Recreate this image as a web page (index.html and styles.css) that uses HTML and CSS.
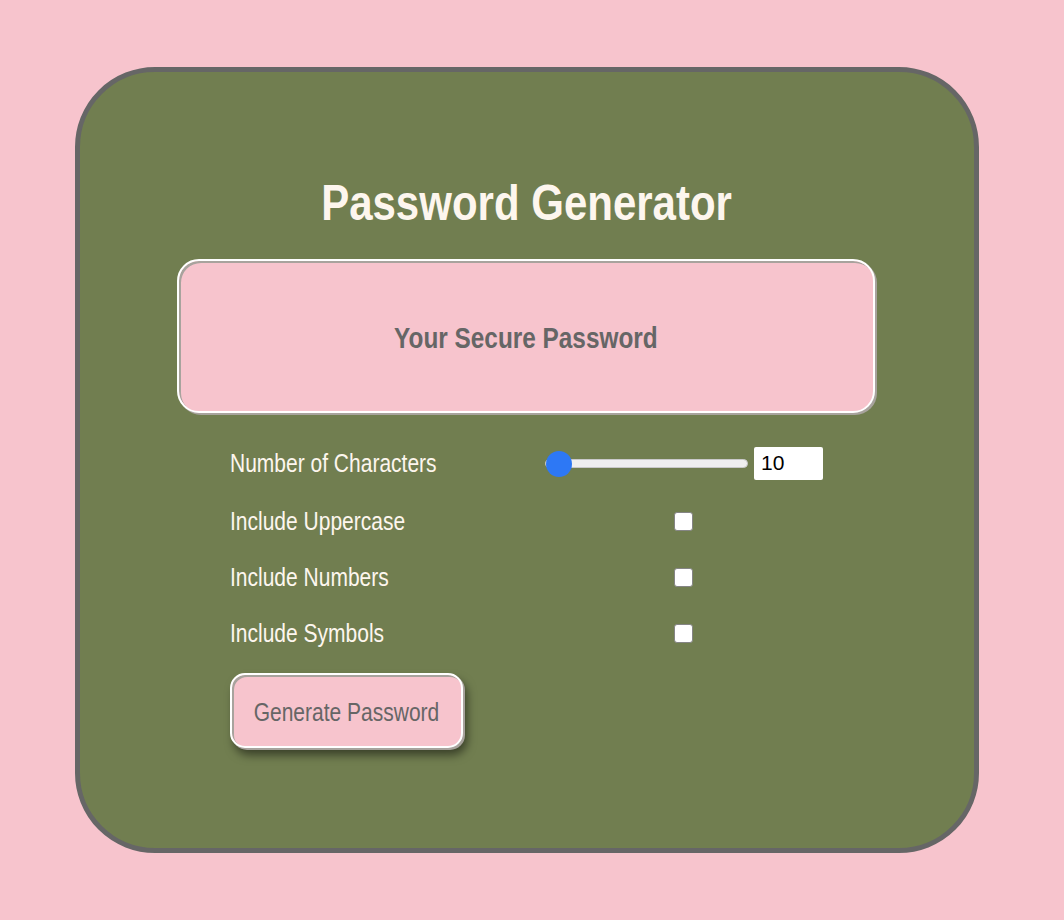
FILE: index.html
```html
<!DOCTYPE html>
<html lang="en">
<head>
<meta charset="utf-8">
<title>Password Generator</title>
<link rel="stylesheet" href="styles.css">
</head>
<body>
  <main class="card">
    <h1 class="title"><span class="narrow">Password Generator</span></h1>
    <div class="output"><span class="narrow">Your Secure Password</span></div>
    <div class="options">
      <label class="opt-label" for="len"><span class="narrow-left">Number of Characters</span></label>
      <div class="opt-control">
        <input class="range" type="range" id="len" min="10" max="100" value="10">
        <input class="num" type="number" value="10">
      </div>
      <label class="opt-label" for="up"><span class="narrow-left">Include Uppercase</span></label>
      <div class="opt-control"><input class="check" type="checkbox" id="up"></div>
      <label class="opt-label" for="nums"><span class="narrow-left">Include Numbers</span></label>
      <div class="opt-control"><input class="check" type="checkbox" id="nums"></div>
      <label class="opt-label" for="sym"><span class="narrow-left">Include Symbols</span></label>
      <div class="opt-control"><input class="check" type="checkbox" id="sym"></div>
    </div>
    <button class="gen" type="button"><span class="narrow">Generate Password</span></button>
  </main>
</body>
</html>
```
FILE: styles.css
```css
html, body {
  margin: 0;
  padding: 0;
  background: #f7c4cd;
}
body {
  padding: 67px 0 0 75px;
  font-family: "Liberation Sans", Arial, sans-serif;
}
.narrow {
  display: inline-block;
  white-space: nowrap;
  transform: scaleX(0.84);
  transform-origin: center;
}
.narrow-left {
  display: inline-block;
  white-space: nowrap;
  transform: scaleX(0.84);
  transform-origin: left center;
}
.card {
  box-sizing: border-box;
  width: 904px;
  height: 786px;
  background: #717e50;
  border: 5px solid #666666;
  border-radius: 80px;
  padding: 103px 0 0 0;
  display: flex;
  flex-direction: column;
  align-items: center;
}
.title {
  margin: 0;
  font-size: 50px;
  line-height: 56px;
  font-weight: bold;
  color: #fdf6ee;
}
.output {
  box-sizing: border-box;
  margin: 28px 2px 0 0;
  padding-top: 4px;
  width: 698px;
  height: 154px;
  background: #f7c4cd;
  border: 2px solid #ffffff;
  border-radius: 22px;
  box-shadow: 2px 2px 0 #a8a39d, inset 2px 2px 0 #a8a39d;
  display: flex;
  align-items: center;
  justify-content: center;
  font-size: 29px;
  font-weight: bold;
  color: #666666;
}
.options {
  align-self: flex-start;
  margin: 34px 0 0 150px;
  display: grid;
  grid-template-columns: 315px 278px;
  grid-template-rows: 32px 28px 28px 28px;
  row-gap: 28px;
  align-items: center;
}
.opt-label {
  color: #fdf6ee;
  font-size: 25px;
  line-height: 28px;
  white-space: nowrap;
}
.opt-control {
  display: flex;
  justify-content: center;
  align-items: center;
  height: 28px;
}
.range {
  -webkit-appearance: none;
  appearance: none;
  width: 203px;
  height: 26px;
  margin: 0 6px 0 0;
  padding: 0;
  background: transparent;
}
.range::-webkit-slider-runnable-track {
  height: 9px;
  background: #efefef;
  border: 1px solid #c9c9c9;
  border-radius: 6px;
}
.range::-webkit-slider-thumb {
  -webkit-appearance: none;
  appearance: none;
  width: 26px;
  height: 26px;
  border-radius: 50%;
  background: #2d78f5;
  border: none;
  margin-top: -8.5px;
}
.num {
  box-sizing: border-box;
  width: 69px;
  height: 33px;
  margin: 0;
  border: none;
  border-radius: 2px;
  font-family: "Liberation Sans", Arial, sans-serif;
  font-size: 21px;
  padding: 0 7px;
  background: #ffffff;
  color: #000;
}
.check {
  -webkit-appearance: none;
  appearance: none;
  box-sizing: border-box;
  width: 19px;
  height: 19px;
  margin: 0 2px 0 0;
  background: #ffffff;
  border: 1.5px solid #858585;
  border-radius: 3px;
}
.gen {
  align-self: flex-start;
  margin: 26px 0 0 150px;
  box-sizing: border-box;
  width: 233px;
  height: 75px;
  padding: 3px 0 0 0;
  background: #f7c4cd;
  border: 2px solid #ffffff;
  border-radius: 15px;
  box-shadow: 2px 2px 0 #a8a39d, inset 2px 2px 0 #a8a39d, 4px 7px 10px rgba(0, 0, 0, 0.5);
  font-family: inherit;
  font-size: 25px;
  color: #666666;
  cursor: pointer;
}
```
